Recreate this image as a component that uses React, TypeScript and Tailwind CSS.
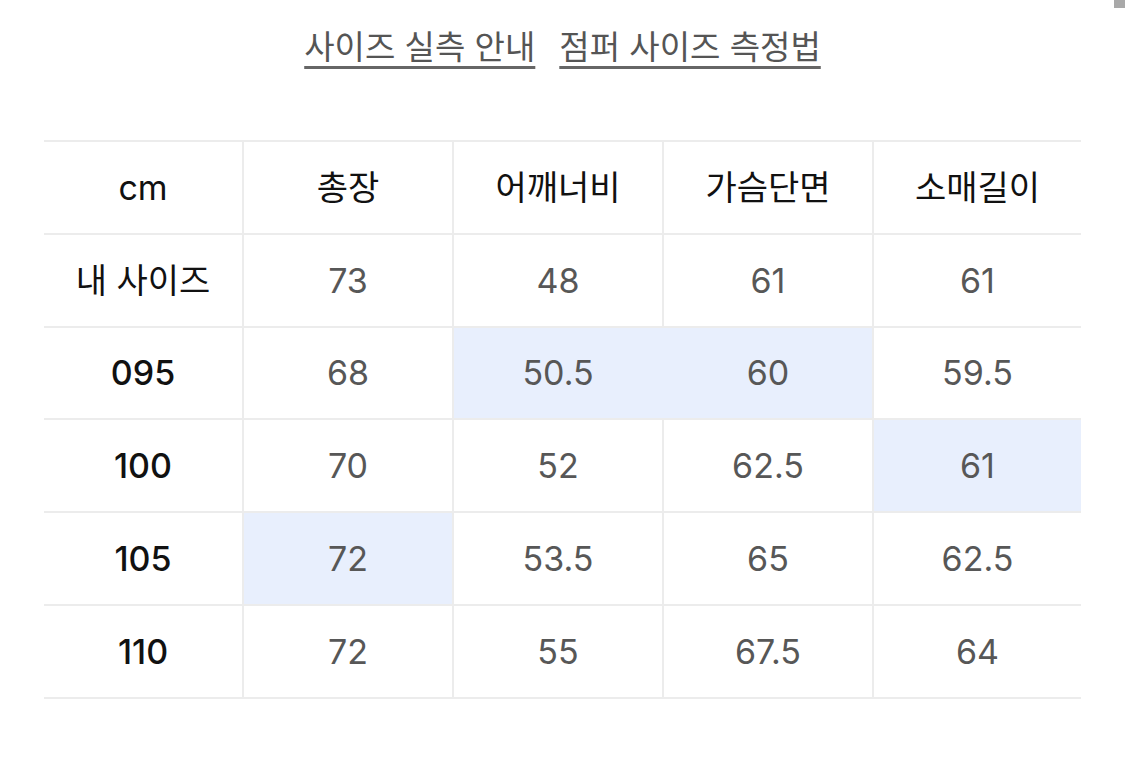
import React from "react";

const cols = ["cm", "총장", "어깨너비", "가슴단면", "소매길이"];

const rows: { label: string; values: string[]; hl: number[] }[] = [
  { label: "내 사이즈", values: ["73", "48", "61", "61"], hl: [] },
  { label: "095", values: ["68", "50.5", "60", "59.5"], hl: [1, 2] },
  { label: "100", values: ["70", "52", "62.5", "61"], hl: [3] },
  { label: "105", values: ["72", "53.5", "65", "62.5"], hl: [0] },
  { label: "110", values: ["72", "55", "67.5", "64"], hl: [] },
];

const font = { fontFamily: 'Inter, "Noto Sans CJK KR", sans-serif' };

const App = () => {
  return (
    <div className="relative w-[1125px] h-[757px] bg-white overflow-hidden" style={font}>
      <div className="absolute top-0 right-0 w-[11px] h-[8px] bg-[#a9a9a9]" />
      <div className="flex justify-center gap-[24px] pt-[24px] text-[33px] leading-[46px] text-[#555]">
        <span className="underline decoration-[3px] underline-offset-[7px] decoration-[#666]">사이즈 실측 안내</span>
        <span className="underline decoration-[3px] underline-offset-[7px] decoration-[#666]">점퍼 사이즈 측정법</span>
      </div>
      <div className="mx-[44px] mt-[70px] border-t-2 border-[#ececec]">
        <div className="grid grid-cols-[198px_210px_210px_210px_209px] border-b-2 border-[#ececec]">
          {cols.map((c, i) => (
            <div
              key={c}
              className={`h-[90.8px] flex items-center justify-center text-[34px] text-[#111] ${i > 0 ? "border-l-2 border-[#ececec]" : ""}`}
            >
              {c}
            </div>
          ))}
        </div>
        {rows.map((r, ri) => (
          <div key={r.label} className="grid grid-cols-[198px_210px_210px_210px_209px] border-b-2 border-[#ececec]">
            <div className={`h-[90.8px] flex items-center justify-center text-[34px] text-[#111] ${ri === 0 ? "font-normal" : "font-medium"}`}>{r.label}</div>
            {r.values.map((v, i) => {
              const on = r.hl.includes(i);
              const prevOn = r.hl.includes(i - 1);
              return (
                <div
                  key={i}
                  className={`h-[90.8px] flex items-center justify-center text-[34px] text-[#575757] border-l-2 ${on ? "bg-[#e8effd]" : ""} ${on && prevOn ? "border-[#e8effd]" : "border-[#ececec]"}`}
                >
                  {v}
                </div>
              );
            })}
          </div>
        ))}
      </div>
    </div>
  );
};

export default App;
